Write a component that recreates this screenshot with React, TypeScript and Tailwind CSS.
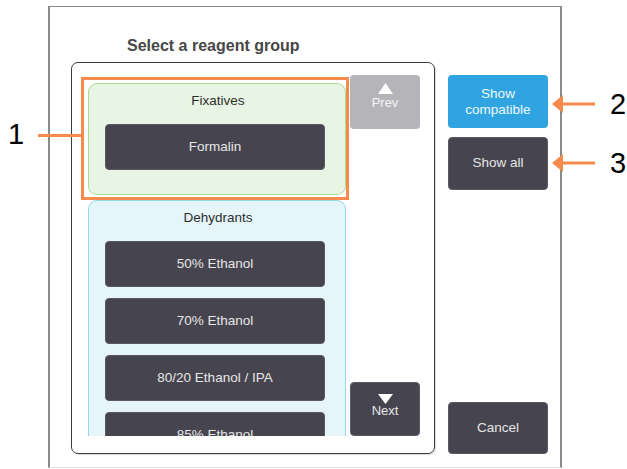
import React from "react";

const font = { fontFamily: '"Liberation Sans", Arial, sans-serif' };

function DarkBtn({ label }: { label: string }) {
  return (
    <div className="h-[46px] shrink-0 rounded-[4px] bg-[#46454f] border border-[#5a5963] flex items-center justify-center text-[13.5px] text-[#e6e6e6] mr-[3px]">
      {label}
    </div>
  );
}

function Arrow() {
  return (
    <svg width="44" height="20" viewBox="0 0 44 20">
      <rect x="9" y="8.5" width="34" height="3" fill="#f58b4c" />
      <polygon points="0,10 11,1 11,19" fill="#f58b4c" />
    </svg>
  );
}

export default function App() {
  return (
    <div className="relative w-[627px] h-[469px] bg-white overflow-hidden" style={font}>
      <div className="ml-[48px] mt-[6px] w-[514px] h-[462px] border-l-2 border-r-2 border-t-[1.5px] border-b border-l-[#8a8a8a] border-r-[#8a8a8a] border-t-[#8a8a8a] border-b-[#e4e4e4] flex flex-col">
        <div className="mt-[30px] pl-[77px] text-[16px] leading-[18px] font-bold text-[#474747]">
          Select a reagent group
        </div>
        <div className="mt-[7px] flex">
          <div className="ml-[21px] w-[364px] h-[392px] rounded-[7px] border border-[#3c3c3c] shadow-[1px_1px_1px_rgba(0,0,0,0.15)] flex pt-[12px] pb-[17px] pl-[16px] pr-[14px]">
            <div className="w-[258px] h-full overflow-hidden flex flex-col gap-[5px]">
              <div className="mt-[8px] h-[112px] shrink-0 rounded-[9px] border border-[#a9dc93] bg-[#e9f5e4] flex flex-col pl-[16px] pr-[17px]">
                <div className="h-[34px] flex items-center justify-center text-[13.5px] text-[#2f2f2f] ml-[3px]">
                  Fixatives
                </div>
                <div className="mt-[6px]">
                  <DarkBtn label="Formalin" />
                </div>
              </div>
              <div className="h-[300px] shrink-0 rounded-t-[9px] border border-[#93d9ea] bg-[#e5f5fa] flex flex-col pl-[16px] pr-[17px]">
                <div className="h-[34px] flex items-center justify-center text-[13.5px] text-[#2f2f2f] ml-[3px]">
                  Dehydrants
                </div>
                <div className="mt-[6px] flex flex-col gap-[11px]">
                  <DarkBtn label="50% Ethanol" />
                  <DarkBtn label="70% Ethanol" />
                  <DarkBtn label="80/20 Ethanol / IPA" />
                  <DarkBtn label="85% Ethanol" />
                </div>
              </div>
            </div>
            <div className="ml-[4px] w-[70px] flex flex-col justify-between">
              <div className="h-[54px] rounded-[4px] bg-[#b5b4b9] flex flex-col items-center pt-[8px]">
                <svg width="15" height="11" viewBox="0 0 15 11">
                  <polygon points="7.5,0 15,11 0,11" fill="#ffffff" />
                </svg>
                <div className="text-[13px] leading-[15px] text-[#f4f4f4] mt-[1px]">Prev</div>
              </div>
              <div className="h-[54px] rounded-[4px] bg-[#46454f] border border-[#5a5963] flex flex-col items-center pt-[11px]">
                <svg width="15" height="10" viewBox="0 0 15 10">
                  <polygon points="0,0 15,0 7.5,10" fill="#ffffff" />
                </svg>
                <div className="text-[13px] leading-[13px] text-[#e6e6e6]">Next</div>
              </div>
            </div>
          </div>
          <div className="ml-[13px] mt-[13px] w-[100px] h-[379px] flex flex-col">
            <div className="h-[53px] rounded-[4px] bg-[#30a4e0] flex flex-col items-center justify-center text-[13.5px] leading-[16px] text-[#eef8fd]">
              <span>Show</span>
              <span>compatible</span>
            </div>
            <div className="mt-[9px] h-[53px] rounded-[4px] bg-[#46454f] border border-[#5a5963] flex items-center justify-center text-[13.5px] text-[#e6e6e6]">
              Show all
            </div>
            <div className="mt-auto h-[52px] rounded-[4px] bg-[#46454f] border border-[#5a5963] flex items-center justify-center text-[13.5px] text-[#e6e6e6]">
              Cancel
            </div>
          </div>
        </div>
      </div>

      {/* annotations */}
      <div className="absolute left-[81px] top-[77px] w-[268px] h-[123px] border-[3px] border-[#f58b4c]" />
      <div className="absolute left-[38px] top-[134px] w-[43px] h-[3px] bg-[#f58b4c]" />
      <div className="absolute left-[8px] top-[118px] text-[29px] leading-[32px] text-black">1</div>
      <div className="absolute left-[552px] top-[94px]">
        <Arrow />
      </div>
      <div className="absolute left-[552px] top-[153px]">
        <Arrow />
      </div>
      <div className="absolute left-[610px] top-[88px] text-[29px] leading-[32px] text-black">2</div>
      <div className="absolute left-[610px] top-[147px] text-[29px] leading-[32px] text-black">3</div>
    </div>
  );
}
